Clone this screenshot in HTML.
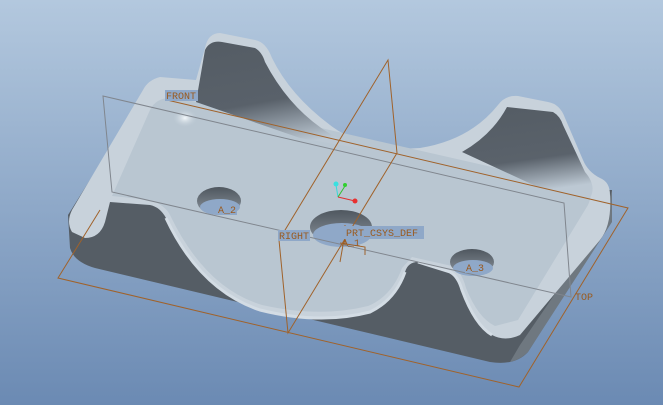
<!DOCTYPE html>
<html><head><style>
html,body{margin:0;padding:0;width:663px;height:405px;overflow:hidden}
svg{display:block}
text{font-family:"Liberation Mono",monospace;font-size:10px;fill:#9a5a1e}
</style></head><body>
<svg width="663" height="405" viewBox="0 0 663 405" xmlns="http://www.w3.org/2000/svg">
<defs>
<linearGradient id="bg" x1="0" y1="0" x2="0" y2="1">
<stop offset="0" stop-color="#b3c8de"/><stop offset="1" stop-color="#6b8ab3"/>
</linearGradient>
<linearGradient id="earL" x1="0" y1="0" x2="0.3" y2="1">
<stop offset="0" stop-color="#545c64"/><stop offset="0.6" stop-color="#59616a"/><stop offset="1" stop-color="#bcc8d3"/>
</linearGradient>
<linearGradient id="earR" x1="0" y1="0" x2="0.2" y2="1">
<stop offset="0" stop-color="#545c64"/><stop offset="0.65" stop-color="#5a626b"/><stop offset="1" stop-color="#bcc8d3"/>
</linearGradient>
<linearGradient id="hole" x1="0" y1="0" x2="0" y2="1">
<stop offset="0" stop-color="#4f575f"/><stop offset="1" stop-color="#8a939c"/>
</linearGradient>
<radialGradient id="hl" cx="0.5" cy="0.5" r="0.5">
<stop offset="0" stop-color="#f4f8fb"/><stop offset="1" stop-color="#c3cfd9" stop-opacity="0"/>
</radialGradient>
</defs>
<rect width="663" height="405" fill="url(#bg)"/>
<!-- dark body -->
<path d="M145,92 L68,215 L70,248 Q74,262 95,268 L490,362 Q515,366 528,352 L610,222 L612,190 L540,190 L160,95 Z" fill="#555d65"/>
<path d="M612,190 L612,222 L528,352 Q520,360 510,362 L520,345 L600,228 Z" fill="#6f7880"/>
<!-- light top -->
<path d="M160,77 Q148,80 143,90 L72,210 Q66,222 72,232 L85,238 Q100,238 105,222 L110,202 L150,205 Q160,207 166,218 Q200,290 260,310 Q320,325 370,312 Q395,300 405,272 Q408,262 418,262 L450,272 Q458,276 462,290 Q475,325 492,335 Q505,342 520,335 L600,240 Q612,225 610,195 Q610,182 600,178 Q588,172 583,160 L565,118 Q560,104 548,102 L518,96 Q505,95 498,105 Q470,140 420,148 Q365,152 330,125 Q290,95 272,58 Q266,42 255,40 L220,33 Q208,33 205,48 L196,80 Z" fill="#c8d2db"/>
<!-- floor -->
<path d="M170,98 Q156,98 150,110 L112,196 L150,200 Q165,205 170,215 Q205,288 262,305 Q320,318 368,306 Q392,296 402,268 L412,257 L452,266 Q462,272 466,288 Q478,318 495,326 L518,320 L588,205 Q594,192 584,188 L 220,105 Z" fill="#b9c6d1"/>
<ellipse cx="185" cy="118" rx="12" ry="9" fill="url(#hl)"/>
<!-- back ears -->
<path d="M205,50 Q210,40 222,42 L255,48 Q262,52 265,62 Q290,110 332,135 Q360,150 380,152 L300,138 L196,102 Z" fill="url(#earL)"/>
<path d="M507,107 L553,112 Q560,116 563,125 L585,172 Q597,186 590,198 L540,188 L462,152 Q492,135 507,107 Z" fill="url(#earR)"/>
<!-- fillet highlights -->
<path d="M166,218 Q200,290 260,310 Q320,325 370,312 Q395,300 405,272" fill="none" stroke="#d3dce4" stroke-width="3"/>
<path d="M418,262 L450,272 Q458,276 462,290 Q475,325 492,335" fill="none" stroke="#d3dce4" stroke-width="3"/>
<!-- holes -->
<ellipse cx="219" cy="201" rx="22" ry="14" fill="url(#hole)"/>
<path d="M197,203 Q219,222 241,203 Q230,210 219,210 Q205,210 197,203Z" fill="#8fa8c8"/>
<ellipse cx="220" cy="207" rx="20" ry="8" fill="#8fa8c8"/>
<ellipse cx="341" cy="227" rx="31" ry="17" fill="url(#hole)"/>
<ellipse cx="342" cy="235" rx="29" ry="12" fill="#8fa8c8"/>
<ellipse cx="472" cy="262" rx="22" ry="13" fill="url(#hole)"/>
<ellipse cx="473" cy="268" rx="20" ry="8" fill="#8fa8c8"/>
<!-- gray plane -->
<path d="M103,96 L564,203 L571,297 L112,192 Z" fill="none" stroke="#80868e" stroke-width="1"/>
<!-- orange planes -->
<g fill="none" stroke="#a0622a" stroke-width="1">
<path d="M167,100 L628,208 L519,387 L58,278 L100,210"/>
<path d="M388,60 L397,153 L288,333 L279,240 Z"/>
<path d="M345,225 L345,245 M340,243 L365,247 L365,255 M343,245 L340,262"/>
</g>
<!-- labels -->
<rect x="165" y="90" width="33" height="11" fill="#8fa8c8"/><text x="166" y="99">FRONT</text>
<rect x="278" y="230" width="32" height="11" fill="#8fa8c8"/><text x="279" y="239">RIGHT</text>
<rect x="342" y="226" width="82" height="13" fill="#8fa8c8"/><text x="346" y="236">PRT_CSYS_DEF</text>
<text x="342" y="246">A_1</text>
<rect x="217" y="204" width="20" height="11" fill="#8fa8c8"/><text x="218" y="213">A_2</text>
<rect x="465" y="262" width="20" height="11" fill="#8fa8c8"/><text x="466" y="271">A_3</text>
<text x="575" y="300">TOP</text>
<!-- csys -->
<line x1="338" y1="197" x2="336" y2="185" stroke="#39d8d8" stroke-width="1"/>
<line x1="338" y1="197" x2="345" y2="186" stroke="#30c030" stroke-width="1"/>
<line x1="338" y1="197" x2="355" y2="201" stroke="#e03030" stroke-width="1"/>
<circle cx="336" cy="184" r="2.5" fill="#39e0e0"/>
<circle cx="345" cy="185" r="2" fill="#30d030"/>
<circle cx="355" cy="201" r="2.5" fill="#e83030"/>
</svg>
</body></html>
